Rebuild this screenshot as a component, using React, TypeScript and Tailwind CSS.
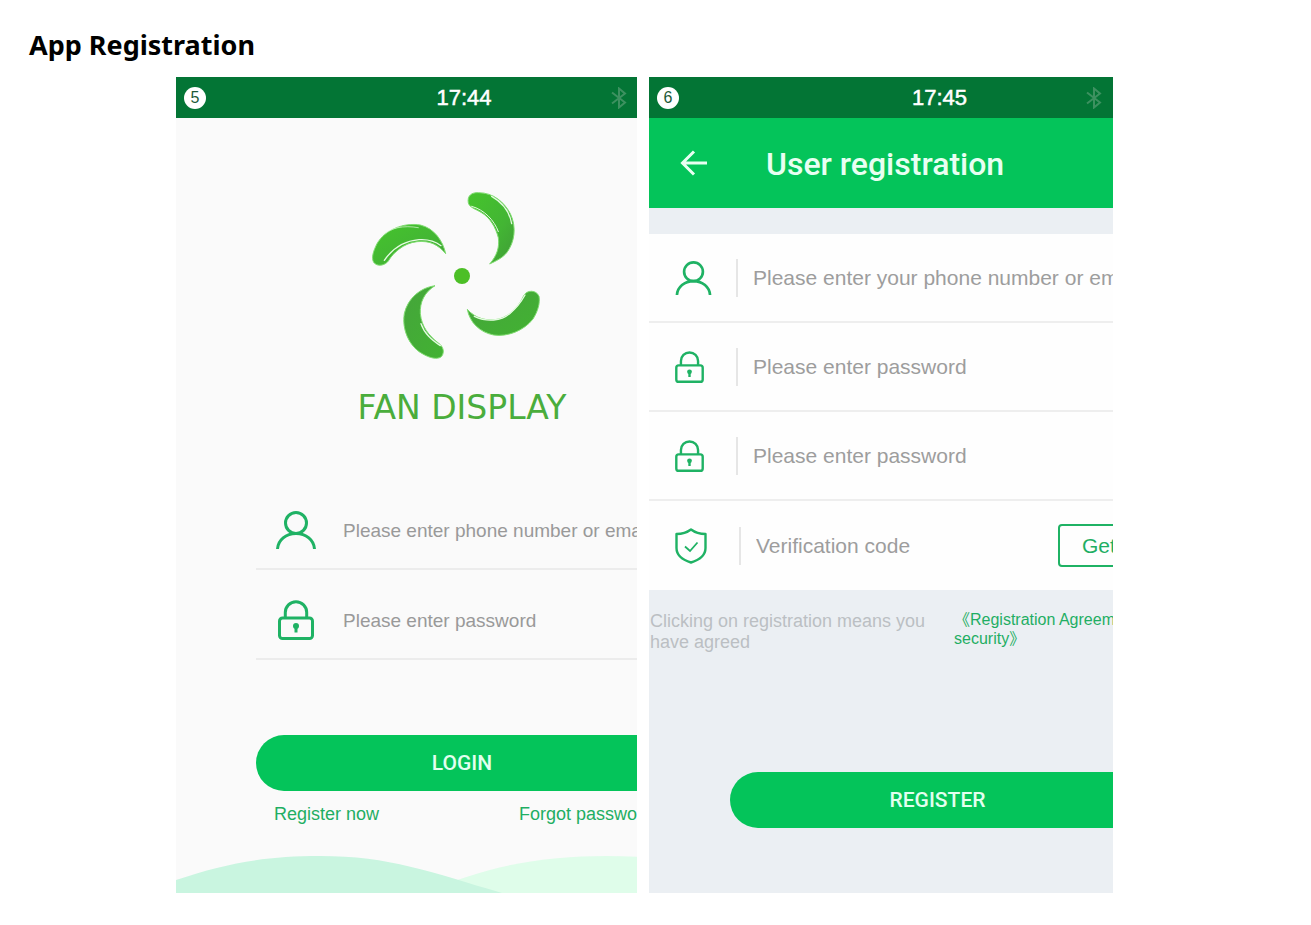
import type { ReactNode } from 'react';

type IconProps = { className?: string };

function BluetoothIcon() {
  return (
    <svg viewBox="0 0 16 22" className="h-[22px] w-4" fill="none" stroke="#3d9160" strokeWidth="2" aria-hidden="true">
      <path d="M1 5.500 14 15.500 8 20.500v-19l6 5L1 16.500" />
    </svg>
  );
}

function UserIcon({ className }: IconProps) {
  return (
    <svg viewBox="0 0 40 38" className={className} fill="none" stroke="#1fb264" strokeWidth="3" aria-hidden="true">
      <circle cx="20" cy="12" r="10.500" />
      <path d="M1.500 38C2 29 10 22.500 20 22.500S38 29 38.500 38" />
    </svg>
  );
}

function LockIcon({ className }: IconProps) {
  return (
    <svg viewBox="0 0 36 40" className={className} fill="none" stroke="#1fb264" strokeWidth="3" aria-hidden="true">
      <rect x="1.500" y="18" width="33" height="20.500" rx="3" />
      <path d="M7.300 18v-5.500a10.700 10.700 0 0 1 21.400 0V18" />
      <circle cx="18" cy="26" r="3" fill="#1fb264" stroke="none" />
      <path d="M18 26v6.500" />
    </svg>
  );
}

function ShieldIcon({ className }: IconProps) {
  return (
    <svg viewBox="0 0 32 36" className={className} fill="none" stroke="#1fb264" strokeWidth="2.400" aria-hidden="true">
      <path d="M16 1.500C12 4.500 7 6 1.500 6v14C1.500 27 8 32 16 34.500 24 32 30.500 27 30.500 20V6C25 6 20 4.500 16 1.500Z" strokeLinejoin="round" />
      <path d="m10 18.500 5 4.500 7.500-8.500" strokeWidth="1.800" />
    </svg>
  );
}

function FanLogo() {
  return (
    <svg viewBox="65 47 540 540" className="size-[180px]" role="img" aria-label="Fan Display logo">
      <defs>
        <linearGradient id="bladeLight" x1="0" y1="0" x2="1" y2="1">
          <stop offset="0" stopColor="#45c42c" />
          <stop offset="0.6" stopColor="#43b534" />
          <stop offset="1" stopColor="#3f9c36" />
        </linearGradient>
        <linearGradient id="bladeDark" x1="0" y1="0" x2="1" y2="1">
          <stop offset="0" stopColor="#45a53b" />
          <stop offset="1" stopColor="#42b232" />
        </linearGradient>
      </defs>
      <g stroke="#7fdc70" strokeWidth="3">
        <path fill="url(#bladeLight)" d="M354 98C350 76 364 66 384 67C430 67 462 96 480 130C500 172 492 216 470 246C456 264 436 272 418 281C440 256 448 230 444 202C436 172 420 142 392 126C376 116 358 112 354 98Z" />
        <path fill="url(#bladeLight)" d="M286 250C278 212 252 174 210 164C160 156 104 178 80 220C70 240 62 262 70 276C80 290 104 286 114 272C128 248 160 218 200 214C240 210 264 224 286 250Z" />
        <path fill="url(#bladeDark)" d="M254 346C210 352 172 384 162 430C154 476 176 528 216 550C236 562 262 570 274 558C284 544 278 528 264 518C236 496 214 470 210 430C208 396 222 366 254 346Z" />
        <path fill="url(#bladeDark)" d="M351 417C358 456 388 486 430 494C470 500 520 482 548 446C562 424 570 398 566 378C558 358 530 358 520 376C508 404 482 436 446 446C410 454 374 444 351 417Z" />
      </g>
      <g fill="none" stroke="#e4fbe0" strokeWidth="4" strokeLinecap="round">
        <path d="M424 78C456 96 478 126 484 160" />
        <path d="M364 108C402 118 432 150 444 184" strokeWidth="3" />
        <path d="M94 196C120 172 160 164 204 172" strokeWidth="2" />
        <path d="M102 270C124 238 160 212 206 208C234 206 256 214 272 226" />
        <path d="M212 460C222 490 244 508 270 526" />
        <path d="M372 438C410 456 452 452 478 430C500 412 514 392 524 374" />
      </g>
      <circle cx="335" cy="317" r="24" fill="#4cbf26" />
    </svg>
  );
}

function StatusBar({ step, time }: { step: number; time: string }) {
  return (
    <div className="grid h-[41px] grid-cols-[1fr_auto_1fr] items-center bg-[#037535] pl-1 text-white">
      <span className="ml-1 flex size-[22px] items-center justify-center rounded-full bg-white text-base leading-none text-[#1d5a38]">
        {step}
      </span>
      <time className="text-[22px] leading-none [-webkit-text-stroke:0.5px_white]">{time}</time>
      <span className="pl-[119px]">
        <BluetoothIcon />
      </span>
    </div>
  );
}

type FieldProps = {
  id: string;
  placeholder: string;
  type?: string;
  icon: ReactNode;
};

function LoginField({ id, placeholder, type = 'text', icon }: FieldProps) {
  return (
    <div className="flex h-[90px] items-center border-b-2 border-[#ececec] pt-3">
      <label htmlFor={id} aria-label={placeholder} className="flex w-20 shrink-0 justify-center">
        {icon}
      </label>
      <input
        id={id}
        type={type}
        placeholder={placeholder}
        className="ml-[7px] min-w-0 flex-1 bg-transparent pt-[3px] text-[19px] outline-none placeholder:text-[#999999]"
      />
    </div>
  );
}

function RegisterField({ id, placeholder, type = 'text', icon, children }: FieldProps & { children?: ReactNode }) {
  return (
    <div className="flex h-[89px] items-center border-b-2 border-[#eeeeee] bg-[#fefefe] pl-[26px] last:border-b-0">
      <label htmlFor={id} aria-label={placeholder} className="flex shrink-0 border-r-2 border-[#e6e6e6]">
        <span className="flex h-[38px] items-center">{icon}</span>
      </label>
      <input
        id={id}
        type={type}
        placeholder={placeholder}
        className="ml-[15px] min-w-0 flex-1 bg-transparent text-[21px] outline-none placeholder:text-[#9d9d9d]"
      />
      {children}
    </div>
  );
}

function LoginScreen() {
  return (
    <section className="overflow-hidden bg-[#fafafa]">
      <div className="w-[572px]">
        <StatusBar step={5} time="17:44" />
        <div className="mt-[68px] flex flex-col items-center">
          <FanLogo />
          <p className="mt-[22px] font-['DejaVu_Sans',sans-serif] text-[33px] leading-10 text-[#4aad3c]">FAN DISPLAY</p>
        </div>
        <form className="mx-20 mt-[52px]">
          <LoginField
            id="login-account"
            placeholder="Please enter phone number or email"
            icon={<UserIcon className="h-[38px] w-10" />}
          />
          <LoginField
            id="login-password"
            type="password"
            placeholder="Please enter password"
            icon={<LockIcon className="h-10 w-9" />}
          />
          <button
            type="button"
            className="mt-[75px] h-14 w-full rounded-full bg-[#04c45a] pt-0.5 font-[Roboto,sans-serif] text-[21px] font-medium text-[#e2ffef]"
          >
            LOGIN
          </button>
        </form>
        <div className="mx-[98px] mt-[11px] flex gap-[140px] text-lg leading-6 whitespace-nowrap text-[#1fae63]">
          <a href="#register">Register now</a>
          <a href="#forgot">Forgot password</a>
        </div>
        <svg viewBox="0 0 572 38" className="mt-[29px] h-[38px] w-full" aria-hidden="true">
          <path d="M250 38C310 10 370 1 430 1s110 8 142 24v13Z" fill="#dffdea" />
          <path d="M0 25C50 8 90 1 144 1c70 0 110 16 182 37H0Z" fill="#c9f5e0" />
        </svg>
      </div>
    </section>
  );
}

function RegisterScreen() {
  return (
    <section className="overflow-hidden bg-[#ebeff3]">
      <div className="w-[577px]">
        <StatusBar step={6} time="17:45" />
        <header className="flex h-[90px] items-center bg-[#04c45a] pt-0.5 pl-[31px] text-[#e8fff2]">
          <button type="button" aria-label="Back">
            <svg viewBox="0 0 28 28" className="size-7" fill="none" stroke="currentColor" strokeWidth="3" aria-hidden="true">
              <path d="M27 13H3M14 1.500 2.500 13 14 24.500" />
            </svg>
          </button>
          <h2 className="ml-[58px] font-[Roboto,sans-serif] text-[32px] leading-10 font-medium">User registration</h2>
        </header>
        <form>
          <div className="mt-[26px]">
            <RegisterField
              id="register-account"
              placeholder="Please enter your phone number or email"
              icon={<UserIcon className="mr-6 h-[34px] w-[37px]" />}
            />
            <RegisterField
              id="register-password"
              type="password"
              placeholder="Please enter password"
              icon={<LockIcon className="mr-8 h-8 w-[29px]" />}
            />
            <RegisterField
              id="register-confirm"
              type="password"
              placeholder="Please enter password"
              icon={<LockIcon className="mr-8 h-8 w-[29px]" />}
            />
            <RegisterField
              id="register-code"
              placeholder="Verification code"
              icon={<ShieldIcon className="mr-8 h-9 w-8" />}
            >
              <button
                type="button"
                className="mr-[26px] h-[43px] w-[142px] rounded border-2 border-[#1fb264] pl-[22px] text-left text-[21px] whitespace-nowrap text-[#1fae63]"
              >
                Get code
              </button>
            </RegisterField>
          </div>
          <div className="flex items-start pt-5">
            <p className="w-[305px] pt-px pr-5 pl-px text-lg leading-[21px] text-[#bbbfc3]">
              Clicking on registration means you have agreed
            </p>
            <a href="#agreement" className="flex-1 text-base leading-[19px] text-[#1fae63]">
              《Registration Agreement and
              <br />
              security》
            </a>
          </div>
          <div className="mt-[119px] px-[81px] pb-[65px]">
            <button
              type="button"
              className="h-14 w-full rounded-full bg-[#04c45a] pt-0.5 font-[Roboto,sans-serif] text-[21px] font-medium text-[#e2ffef]"
            >
              REGISTER
            </button>
          </div>
        </form>
      </div>
    </section>
  );
}

export default function App() {
  return (
    <main className="min-h-screen bg-white pt-[27px] pb-8 font-['Liberation_Sans','Noto_Sans_CJK_SC',sans-serif]">
      <h1 className="pl-[29px] font-['Noto_Sans',sans-serif] text-[27px] leading-9 font-bold text-black">
        App Registration
      </h1>
      <div className="mt-3.5 mr-[198px] ml-44 grid grid-cols-[461fr_464fr] gap-3">
        <LoginScreen />
        <RegisterScreen />
      </div>
    </main>
  );
}
